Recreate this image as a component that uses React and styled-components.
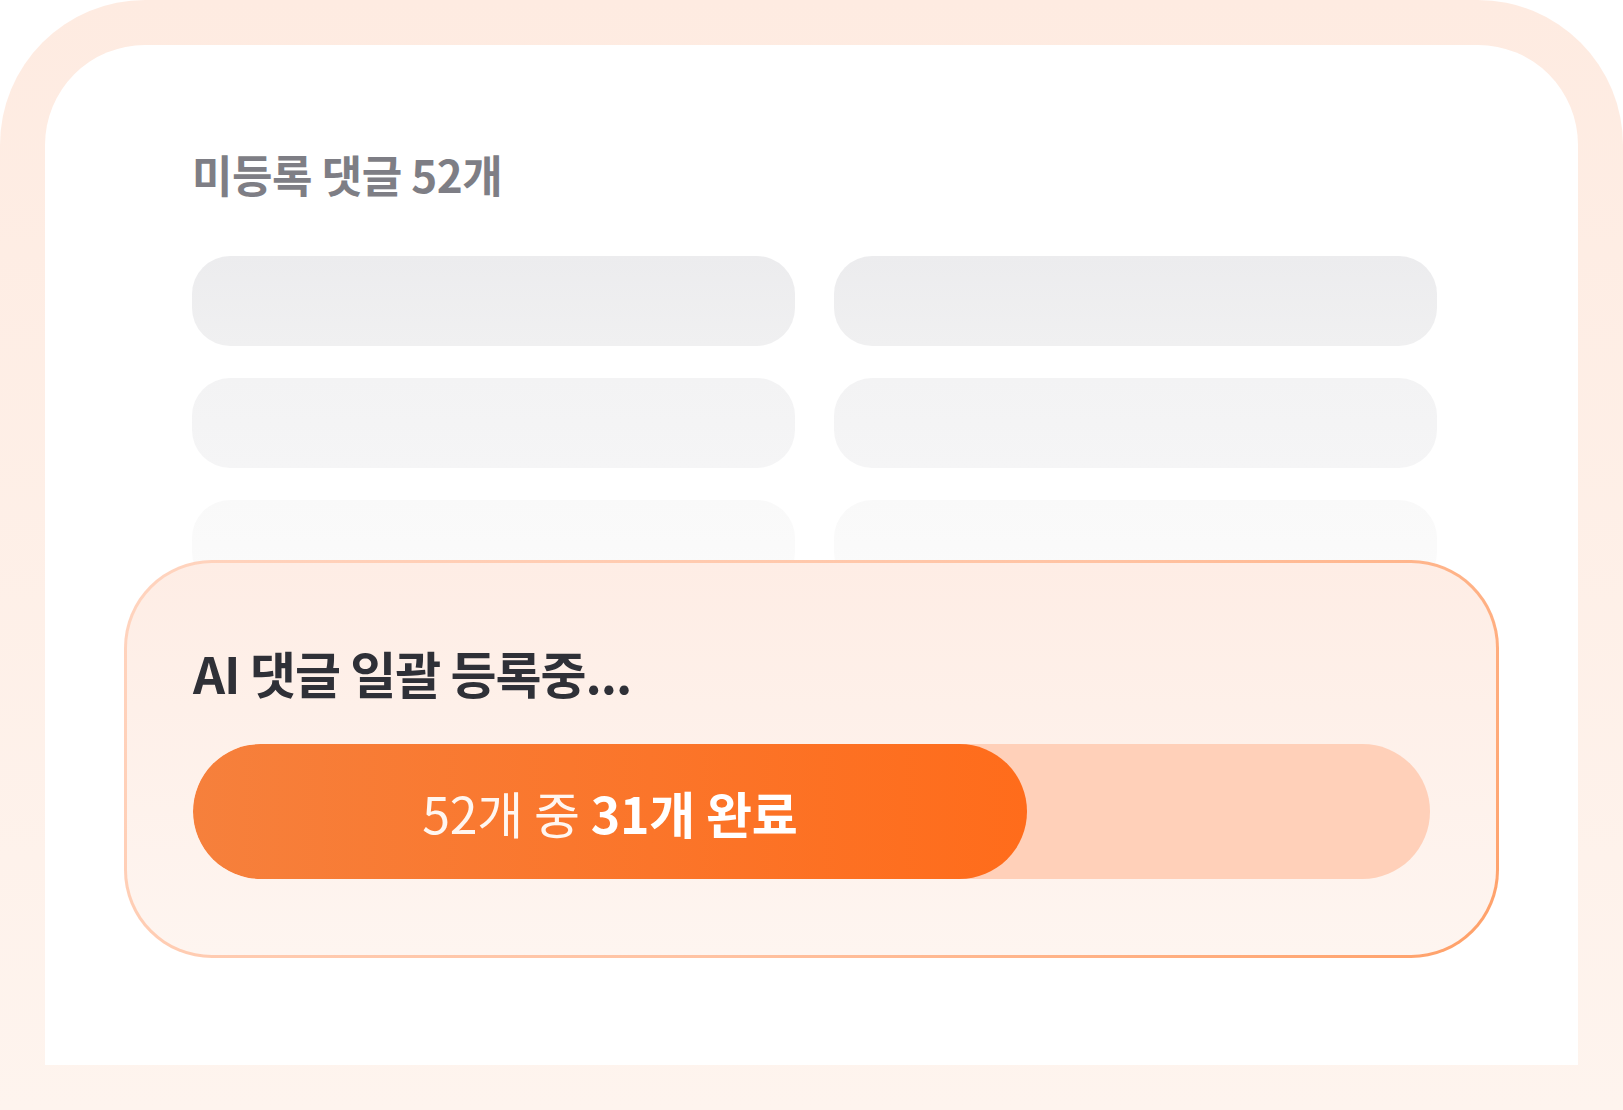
import React from "react";
import styled, { createGlobalStyle } from "styled-components";

const GlobalStyle = createGlobalStyle`
  html, body {
    margin: 0;
    padding: 0;
    background: #ffffff;
  }
  body {
    font-family: "Noto Sans CJK KR", "Noto Sans", sans-serif;
    overflow: hidden;
  }
`;

const Frame = styled.div`
  width: 1623px;
  height: 1110px;
  box-sizing: border-box;
  padding: 45px 45px 45px;
  border-radius: 145px 145px 0 0;
  background: linear-gradient(180deg, #feebe1 0%, #fef4ee 100%);
`;

const Screen = styled.div`
  position: relative;
  height: 100%;
  box-sizing: border-box;
  padding: 107px 141px 0 147px;
  background: #ffffff;
  border-radius: 100px 100px 0 0;
`;

const SectionTitle = styled.h2`
  margin: 0;
  font-size: 44px;
  line-height: 1;
  font-weight: 600;
  letter-spacing: -0.01em;
  color: #7e7e85;
`;

const SkeletonGrid = styled.div`
  display: grid;
  grid-template-columns: repeat(2, 1fr);
  column-gap: 39px;
  row-gap: 32px;
  margin-top: 60px;
`;

const SkeletonRow = styled.div`
  height: 90px;
  border-radius: 38px;
  background: linear-gradient(180deg, ${(p) => p.$from} 0%, ${(p) => p.$to} 100%);
`;

const ProgressCard = styled.section`
  position: absolute;
  left: 79px;
  top: 515px;
  width: 1375px;
  height: 398px;
  box-sizing: border-box;
  padding: 84px 66px 0;
  border-radius: 88px;
  border: 3px solid transparent;
  background:
    linear-gradient(180deg, #feede5 0%, #fef5f0 100%) padding-box,
    linear-gradient(135deg, #ffd4bf 0%, #ffc3a3 55%, #ffa068 100%) border-box;
`;

const CardTitle = styled.h3`
  margin: 0;
  font-size: 50px;
  line-height: 1;
  font-weight: 700;
  letter-spacing: -0.02em;
  color: #2f3037;
`;

const Track = styled.div`
  display: flex;
  margin-top: 47px;
  height: 135px;
  border-radius: 68px;
  background: #ffd0b9;
  overflow: hidden;
`;

const Fill = styled.div`
  display: flex;
  align-items: center;
  justify-content: center;
  height: 100%;
  border-radius: 68px;
  background: linear-gradient(90deg, #f6803c 0%, #ff6c1b 100%);
  color: #fff6f0;
  font-size: 50px;
  letter-spacing: -0.005em;
  white-space: nowrap;
`;

const Light = styled.span`
  font-weight: 400;
`;

const Strong = styled.strong`
  font-weight: 700;
  color: #ffffff;
`;

const rows = [
  ["#ececee", "#f0f0f1"],
  ["#f3f3f4", "#f5f5f6"],
  ["#f9f9f9", "#fbfbfb"],
];

export default function App() {
  const total = 52;
  const done = 31;
  return (
    <>
      <GlobalStyle />
      <Frame>
        <Screen>
          <SectionTitle>미등록 댓글 {total}개</SectionTitle>
          <SkeletonGrid>
            {rows.map(([from, to], i) => (
              <React.Fragment key={i}>
                <SkeletonRow $from={from} $to={to} />
                <SkeletonRow $from={from} $to={to} />
              </React.Fragment>
            ))}
          </SkeletonGrid>
          <ProgressCard>
            <CardTitle>AI 댓글 일괄 등록중...</CardTitle>
            <Track>
              <Fill style={{ width: "67.4%" }}>
                <Light>{total}개 중&nbsp;</Light>
                <Strong>{done}개 완료</Strong>
              </Fill>
            </Track>
          </ProgressCard>
        </Screen>
      </Frame>
    </>
  );
}
